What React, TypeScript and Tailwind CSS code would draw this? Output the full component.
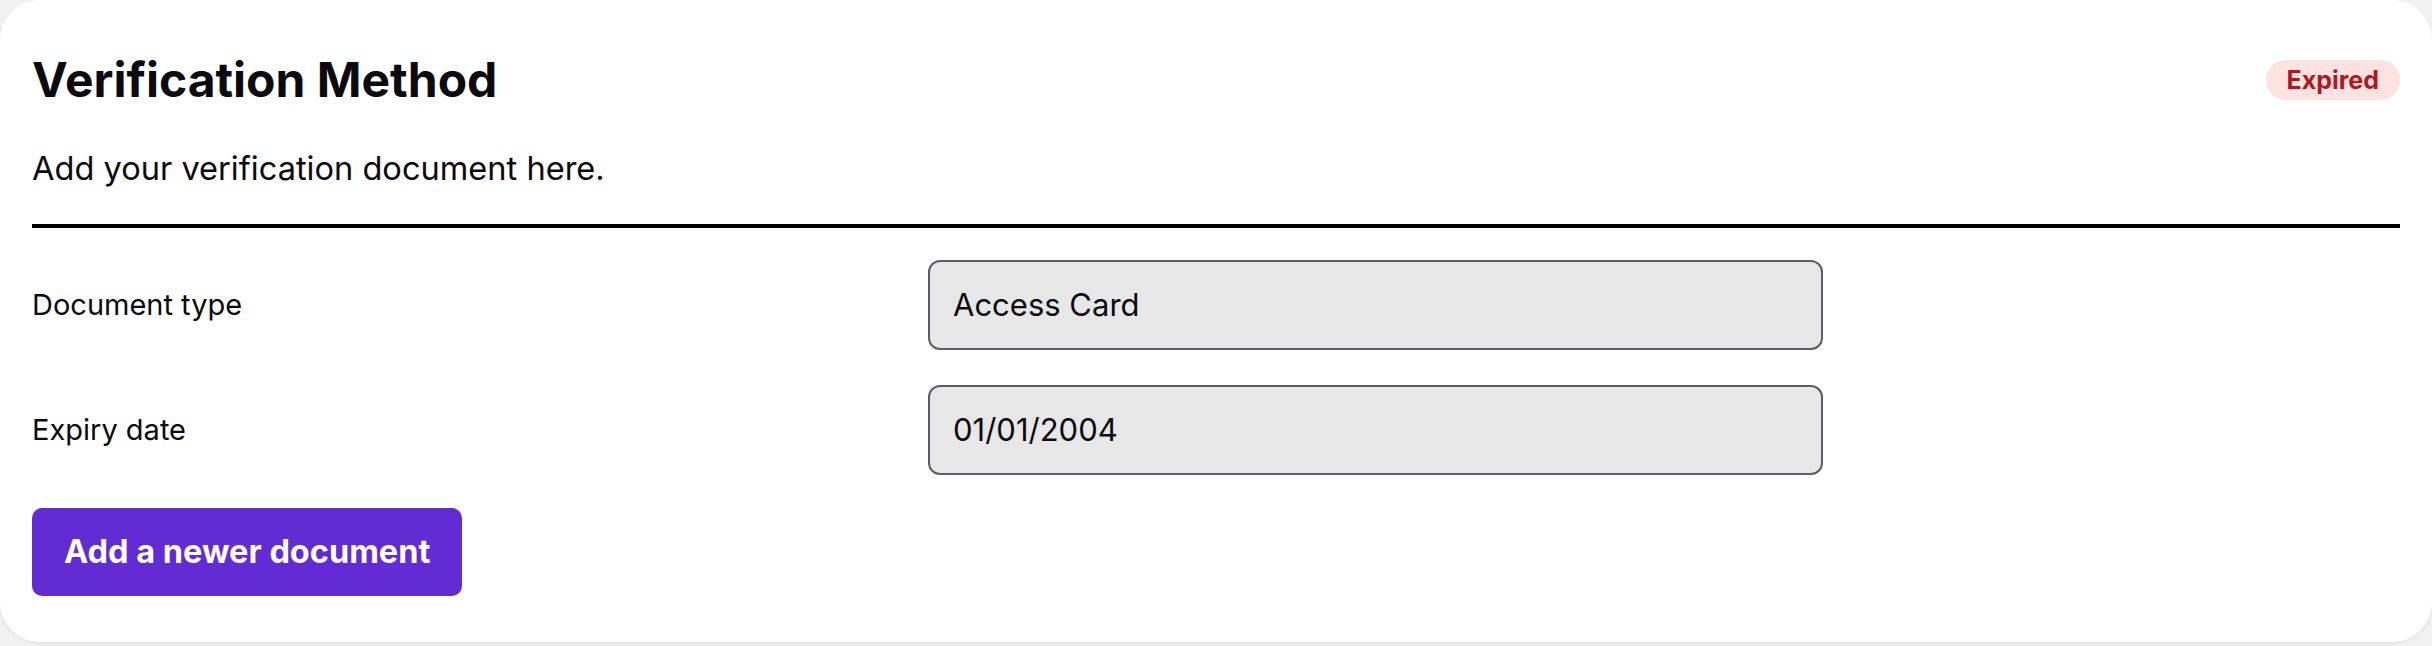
export default function App() {
  return (
    <div className="min-h-screen bg-[#f1f1f1] font-['Inter',sans-serif] text-[#0b0a10]">
      <div className="h-[642px] rounded-[40px] bg-white px-8 pt-[52px] shadow-[0_2px_4px_rgba(0,0,0,0.06)]">
        <div className="flex items-center justify-between">
          <h1 className="text-[48px] font-bold leading-[56px]">Verification Method</h1>
          <span className="rounded-full bg-[#fde2e2] px-[21px] text-[25px] font-bold leading-[40px] text-[#b4161b]">
            Expired
          </span>
        </div>
        <p className="mt-[41px] text-[32.6px] leading-[38px]">Add your verification document here.</p>
        <div className="mt-[37px] h-[4px] bg-black" />

        <div className="mt-[32px] grid grid-cols-[896px_895px] items-center gap-y-[35px]">
          <label className="text-[29px]">Document type</label>
          <div className="flex h-[90px] items-center rounded-[12px] border-2 border-[#615b66] bg-[#e7e7e7] pl-[23px] text-[31px]">
            Access Card
          </div>
          <label className="text-[29px]">Expiry date</label>
          <div className="flex h-[90px] items-center rounded-[12px] border-2 border-[#615b66] bg-[#e7e7e7] pl-[23px] text-[31px]">
            01/01/2004
          </div>
        </div>

        <button className="mt-[33px] h-[88px] rounded-[10px] bg-[#622bd3] px-8 text-[32.5px] font-bold text-white">
          Add a newer document
        </button>
      </div>
    </div>
  );
}
